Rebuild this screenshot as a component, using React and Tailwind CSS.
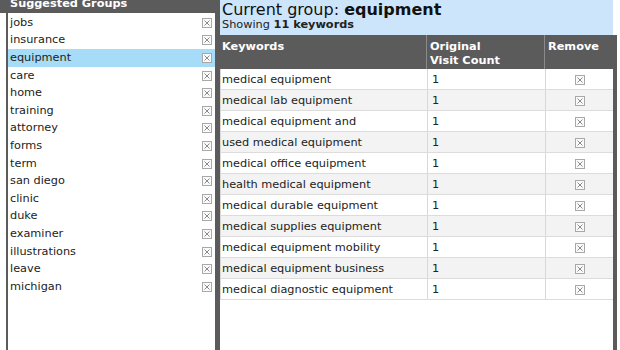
import React from "react";

const groups = [
  "jobs",
  "insurance",
  "equipment",
  "care",
  "home",
  "training",
  "attorney",
  "forms",
  "term",
  "san diego",
  "clinic",
  "duke",
  "examiner",
  "illustrations",
  "leave",
  "michigan",
];

const keywords = [
  "medical equipment",
  "medical lab equipment",
  "medical equipment and",
  "used medical equipment",
  "medical office equipment",
  "health medical equipment",
  "medical durable equipment",
  "medical supplies equipment",
  "medical equipment mobility",
  "medical equipment business",
  "medical diagnostic equipment",
];

// little boxed x used for delete buttons
const XBox = () => (
  <span className="inline-flex w-[10px] h-[10px] border border-[#a8a8a8] bg-[#fafafa] items-center justify-center">
    <svg width="6" height="6" viewBox="0 0 6 6">
      <path d="M0.5 0.5L5.5 5.5M5.5 0.5L0.5 5.5" stroke="#8a8a8a" strokeWidth="1" />
    </svg>
  </span>
);

const App = () => {
  const selected = "equipment";

  return (
    <div className="w-[620px] h-[350px] overflow-hidden bg-white flex font-['DejaVu_Sans',sans-serif] text-[11.3px] text-[#222]">
      {/* left: suggested groups */}
      <div className="w-[215px] flex flex-col">
        <div className="h-[13px] bg-[#5b5b5b] text-white font-bold leading-[14px] pl-[10px] overflow-hidden">
          <div className="-mt-[3px]">Suggested Groups</div>
        </div>
        <div className="flex-1 ml-[6px] border-l-2 border-[#5b5b5b] pt-[1px]">
          {groups.map((g) => (
            <div
              key={g}
              className={
                "h-[17.6px] flex items-center justify-between pl-[2px] pr-[3px] " +
                (g === selected ? "bg-[#a6dcf7]" : "")
              }
            >
              <span className="pt-[1px]">{g}</span>
              <XBox />
            </div>
          ))}
        </div>
      </div>

      {/* right: current group */}
      <div className="flex-1 flex flex-col border-l-[5px] border-[#5b5b5b] mr-[3px]">
        <div className="h-[35px] bg-[#cde5fa] mr-[4px] pl-[2px]">
          <div className="text-[16px] leading-[18px] pt-[1px] text-[#111]">
            Current group: <span className="font-bold">equipment</span>
          </div>
          <div className="leading-[14px] mt-[-1px]">
            Showing <span className="font-bold">11 keywords</span>
          </div>
        </div>
        <div className="flex-1 border-r-4 border-[#5b5b5b]">
          <div className="grid grid-cols-[206px_118px_1fr] bg-[#5b5b5b] text-white font-bold leading-[14px] h-[34px]">
            <div className="pl-[2px] pt-[5px]">Keywords</div>
            <div className="pl-[3px] pt-[5px] border-l border-[#8a8a8a]">
              Original
              <br />
              Visit Count
            </div>
            <div className="pl-[3px] pt-[5px] border-l border-[#8a8a8a]">Remove</div>
          </div>
          {keywords.map((k, i) => (
            <div
              key={k}
              className={
                "grid grid-cols-[206px_118px_1fr] h-[21px] border-b border-[#dcdcdc] border-l border-l-[#d8d8d8] " +
                (i % 2 === 1 ? "bg-[#f3f3f3]" : "bg-white")
              }
            >
              <div className="pl-[1px] pt-[2px] flex items-center">{k}</div>
              <div className="pl-[4px] pt-[2px] flex items-center border-l border-[#d8d8d8]">1</div>
              <div className="pt-[1px] flex items-center justify-center border-l border-[#d8d8d8]">
                <XBox />
              </div>
            </div>
          ))}
        </div>
      </div>
    </div>
  );
};

export default App;
